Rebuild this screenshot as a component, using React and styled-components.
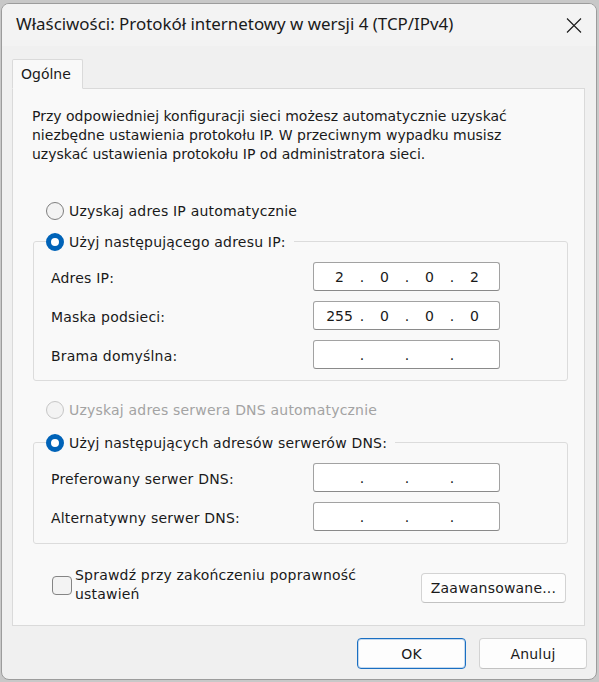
import React from "react";
import styled, { createGlobalStyle } from "styled-components";

const Global = createGlobalStyle`
  html, body { margin: 0; padding: 0; }
  body {
    background: #c8c8c8;
    width: 599px;
    height: 682px;
    overflow: hidden;
    font-family: "DejaVu Sans", "Noto Sans", sans-serif;
  }
  * { box-sizing: border-box; }
`;

const Window = styled.div`
  margin: 3px 2px 0 1px;
  width: 596px;
  height: 677px;
  background: #f0f0f0;
  border: 1px solid #9c9c9c;
  border-radius: 8px;
  display: flex;
  flex-direction: column;
  overflow: hidden;
  color: #1a1a1a;
`;

const TitleBar = styled.div`
  height: 42px;
  display: flex;
  align-items: center;
  justify-content: space-between;
  padding: 0 14px 0 14px;
  background: #f3f3f3;
`;

const Title = styled.div`
  font-family: "Noto Sans", "Open Sans", sans-serif;
  font-size: 16.9px;
  color: #1a1a1a;
  margin-top: -3px;
`;

const CloseButton = styled.button`
  border: 0;
  background: transparent;
  padding: 0;
  width: 16px;
  height: 16px;
  display: flex;
  align-items: center;
  justify-content: center;
  margin-right: 0;
`;

const Body = styled.div`
  flex: 1;
  display: flex;
  flex-direction: column;
  padding: 13px 11px 0 10px;
`;

const TabStrip = styled.div`
  display: flex;
  margin-bottom: -1px;
  position: relative;
  z-index: 1;
`;

const Tab = styled.div`
  width: 71px;
  height: 30px;
  padding-left: 8px;
  display: flex;
  align-items: center;
  font-size: 14px;
  background: #f9f9f9;
  border: 1px solid #dadada;
  border-bottom: 1px solid #f9f9f9;
  border-radius: 2px 2px 0 0;
`;

const Panel = styled.div`
  height: 538px;
  background: #f9f9f9;
  border: 1px solid #dadada;
  padding: 18px 16px 0 19px;
  display: flex;
  flex-direction: column;
  font-size: 14px;
  letter-spacing: 0.2px;
`;

const Intro = styled.p`
  margin: 0;
  line-height: 19px;
  letter-spacing: 0;
  white-space: nowrap;
`;

const RadioRow = styled.label`
  display: flex;
  align-items: center;
  gap: 5px;
  height: 21px;
  margin-left: 14px;
  margin-top: ${(p) => p.$top}px;
  color: ${(p) => (p.$disabled ? "#a3a3a3" : "#1a1a1a")};
`;

const Radio = styled.input.attrs({ type: "radio" })`
  appearance: none;
  margin: 0;
  width: 18px;
  height: 18px;
  border-radius: 50%;
  flex: none;
  background: #f3f3f3;
  border: 1px solid #7f7f7f;
  &:disabled {
    border-color: #c6c6c6;
  }
  &:checked {
    background: #ffffff;
    border: 5px solid #0063b8;
  }
`;

const Group = styled.fieldset`
  margin: ${(p) => p.$top}px 0 0 1px;
  padding: 0 67px ${(p) => p.$bottom}px 17px;
  border: 1px solid #dcdcdc;
  border-radius: 3px;
  display: flex;
  flex-direction: column;
  gap: 10px;
`;

const Legend = styled.legend`
  padding: 0 8px 0 0;
  margin-left: -5px;
  margin-bottom: 10px;
`;

const LegendRadio = styled(RadioRow)`
  margin-left: 0;
  margin-top: 0;
`;

const FieldRow = styled.div`
  display: grid;
  grid-template-columns: 1fr 187px;
  align-items: center;
`;

const FieldLabel = styled.span`
  padding-top: 2px;
`;

const IpBox = styled.div`
  height: 29px;
  background: #ffffff;
  border: 1px solid #a2a2a2;
  border-bottom-color: #8a8a8a;
  border-radius: 3px;
  display: grid;
  grid-template-columns: 37px 8px 37px 8px 37px 8px 37px;
  padding-left: 7px;
  align-items: center;
  letter-spacing: 0;
`;

const Octet = styled.span`
  text-align: center;
`;

const Dot = styled.span`
  text-align: center;
`;

const CheckRow = styled.div`
  display: flex;
  align-items: center;
  justify-content: space-between;
  margin-top: 22px;
  padding-left: 20px;
`;

const CheckLabel = styled.label`
  display: flex;
  align-items: center;
  gap: 3px;
  width: 310px;
`;

const Checkbox = styled.input.attrs({ type: "checkbox" })`
  appearance: none;
  margin: 0;
  width: 20px;
  height: 19px;
  flex: none;
  border: 1px solid #858585;
  border-radius: 4px;
  background: #f3f3f3;
`;

const CheckText = styled.span`
  line-height: 19px;
`;

const Button = styled.button`
  font-family: "DejaVu Sans", "Noto Sans", sans-serif;
  font-size: 14px;
  letter-spacing: 0.2px;
  color: #1a1a1a;
  height: 31px;
  width: ${(p) => p.$w}px;
  border-radius: 4px;
  background: #fdfdfd;
  border: 1px solid ${(p) => (p.$primary ? "#1a6fc2" : "#d3d3d3")};
  border-bottom-color: ${(p) => (p.$primary ? "#1a6fc2" : "#c2c2c2")};
  box-shadow: ${(p) => (p.$primary ? "inset 0 0 0 1px rgba(26,111,194,0.25)" : "none")};
  padding: 0;
`;

const AdvancedButton = styled(Button)`
  margin-right: 2px;
  margin-top: 5px;
  height: 30px;
`;

const Footer = styled.div`
  display: flex;
  justify-content: flex-end;
  gap: 13px;
  padding: 12px 0 0 0;
  margin-right: -2px;
`;

const ipRows = [
  { label: "Adres IP:", value: ["2", "0", "0", "2"] },
  { label: "Maska podsieci:", value: ["255", "0", "0", "0"] },
  { label: "Brama domyślna:", value: ["", "", "", ""] },
];

const dnsRows = [
  { label: "Preferowany serwer DNS:", value: ["", "", "", ""] },
  { label: "Alternatywny serwer DNS:", value: ["", "", "", ""] },
];

function IpField({ value }) {
  return (
    <IpBox>
      <Octet>{value[0]}</Octet>
      <Dot>.</Dot>
      <Octet>{value[1]}</Octet>
      <Dot>.</Dot>
      <Octet>{value[2]}</Octet>
      <Dot>.</Dot>
      <Octet>{value[3]}</Octet>
    </IpBox>
  );
}

export default function App() {
  return (
    <>
      <Global />
      <Window>
        <TitleBar>
          <Title>Właściwości: Protokół internetowy w wersji 4 (TCP/IPv4)</Title>
          <CloseButton aria-label="Zamknij">
            <svg width="16" height="15" viewBox="0 0 16 15">
              <path d="M1 0.5 L15 14.5 M15 0.5 L1 14.5" stroke="#1a1a1a" strokeWidth="1.1" fill="none" />
            </svg>
          </CloseButton>
        </TitleBar>
        <Body>
          <TabStrip>
            <Tab>Ogólne</Tab>
          </TabStrip>
          <Panel>
            <Intro>
              Przy odpowiedniej konfiguracji sieci możesz automatycznie uzyskać
              <br />
              niezbędne ustawienia protokołu IP. W przeciwnym wypadku musisz
              <br />
              uzyskać ustawienia protokołu IP od administratora sieci.
            </Intro>
            <RadioRow $top={36}>
              <Radio name="ip" />
              Uzyskaj adres IP automatycznie
            </RadioRow>
            <Group $top={10} $bottom={11}>
              <Legend>
                <LegendRadio>
                  <Radio name="ip" defaultChecked />
                  Użyj następującego adresu IP:
                </LegendRadio>
              </Legend>
              {ipRows.map((r) => (
                <FieldRow key={r.label}>
                  <FieldLabel>{r.label}</FieldLabel>
                  <IpField value={r.value} />
                </FieldRow>
              ))}
            </Group>
            <RadioRow $top={18} $disabled>
              <Radio name="dns" disabled />
              Uzyskaj adres serwera DNS automatycznie
            </RadioRow>
            <Group $top={12} $bottom={12}>
              <Legend>
                <LegendRadio>
                  <Radio name="dns" defaultChecked />
                  Użyj następujących adresów serwerów DNS:
                </LegendRadio>
              </Legend>
              {dnsRows.map((r) => (
                <FieldRow key={r.label}>
                  <FieldLabel>{r.label}</FieldLabel>
                  <IpField value={r.value} />
                </FieldRow>
              ))}
            </Group>
            <CheckRow>
              <CheckLabel>
                <Checkbox />
                <CheckText>Sprawdź przy zakończeniu poprawność ustawień</CheckText>
              </CheckLabel>
              <AdvancedButton $w={145}>Zaawansowane...</AdvancedButton>
            </CheckRow>
          </Panel>
          <Footer>
            <Button $primary $w={109}>OK</Button>
            <Button $w={108}>Anuluj</Button>
          </Footer>
        </Body>
      </Window>
    </>
  );
}
